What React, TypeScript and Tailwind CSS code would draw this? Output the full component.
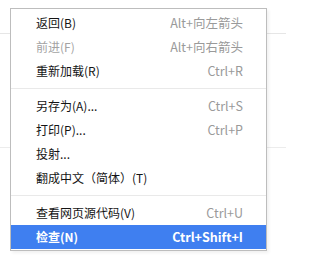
type Item =
  | { kind: "item"; label: string; shortcut?: string; disabled?: boolean; active?: boolean }
  | { kind: "sep" };

const items: Item[] = [
  { kind: "item", label: "返回(B)", shortcut: "Alt+向左箭头" },
  { kind: "item", label: "前进(F)", shortcut: "Alt+向右箭头", disabled: true },
  { kind: "item", label: "重新加载(R)", shortcut: "Ctrl+R" },
  { kind: "sep" },
  { kind: "item", label: "另存为(A)...", shortcut: "Ctrl+S" },
  { kind: "item", label: "打印(P)...", shortcut: "Ctrl+P" },
  { kind: "item", label: "投射..." },
  { kind: "item", label: "翻成中文（简体）(T)" },
  { kind: "sep" },
  { kind: "item", label: "查看网页源代码(V)", shortcut: "Ctrl+U" },
  { kind: "item", label: "检查(N)", shortcut: "Ctrl+Shift+I", active: true },
];

export default function App() {
  return (
    <div
      className="relative h-[268px] w-[286px] overflow-hidden bg-white"
      style={{ fontFamily: '"Noto Sans CJK SC", "Noto Sans", sans-serif' }}
    >
      {/* page content peeking out behind the menu */}
      <div className="h-[34px] border-b border-[#e6e6e6]" />
      <div className="h-[114px] border-b border-[#ececec]" />

      <div className="absolute left-[10px] top-[8px] w-[257px] border border-[#bdbdbd] bg-white pb-[1px] pt-[2px] shadow-[2px_2px_3px_rgba(0,0,0,0.06)]">
        {items.map((item, i) =>
          item.kind === "sep" ? (
            <div key={i} className="py-[5px]">
              <div className="h-px bg-[#e9e9e9]" />
            </div>
          ) : (
            <div
              key={i}
              className={`flex h-[24px] items-center justify-between pl-[25px] pr-[23px] text-[12px] leading-none ${
                item.active ? "bg-[#3f7ff0] font-semibold text-white" : item.disabled ? "text-[#a3a3a3]" : "text-[#141414]"
              }`}
            >
              <span>{item.label}</span>
              {item.shortcut && (
                <span className={`text-[12.5px] ${item.active ? "text-white" : "text-[#9a9a9a]"}`}>{item.shortcut}</span>
              )}
            </div>
          ),
        )}
      </div>
    </div>
  );
}
